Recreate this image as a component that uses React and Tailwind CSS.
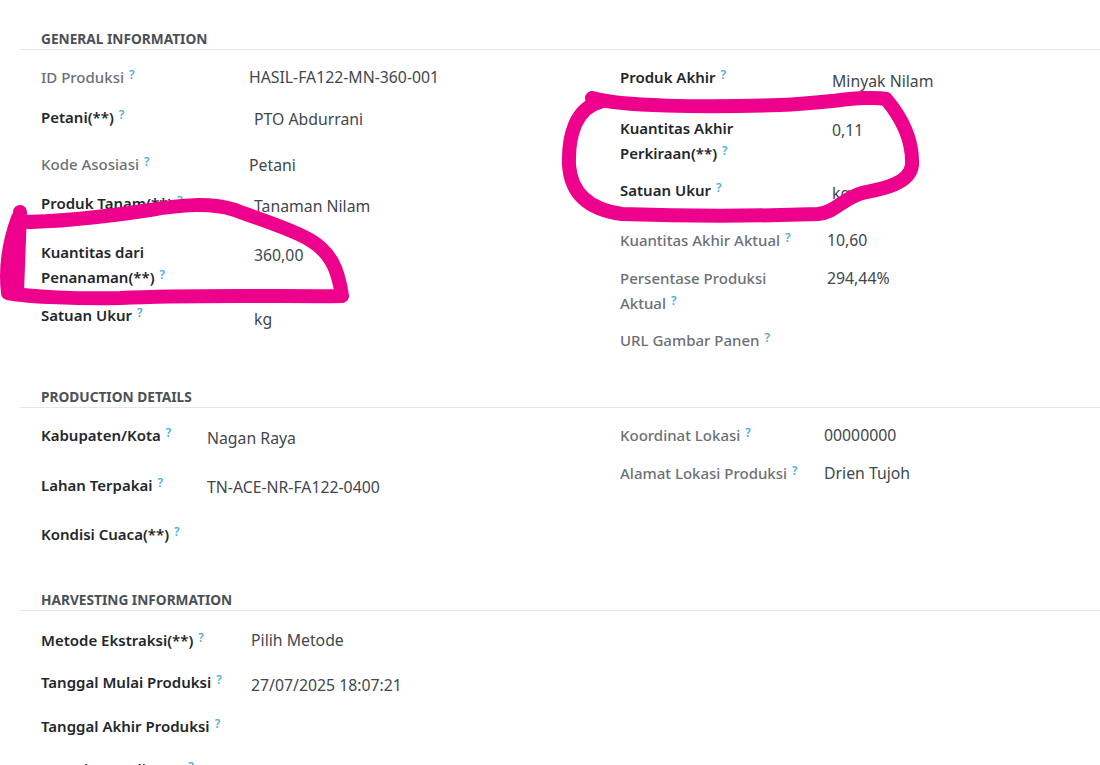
import React from "react";

const Q = () => (
  <sup className="ml-[5px] text-[12px] font-semibold text-[#49b0d8] relative top-[-4px]">?</sup>
);

function Row({ h, label, label2, value, muted, lw, vx = 0, vy = 0 }) {
  return (
    <div className="flex items-start" style={{ height: h }}>
      <div
        className={
          "shrink-0 text-[15px] leading-[25px] " +
          (muted ? "font-medium text-[#6c7075]" : "font-semibold text-[#23272b]")
        }
        style={{ width: lw }}
      >
        {label2 ? (
          <>
            <div>{label}</div>
            <div>
              {label2}
              <Q />
            </div>
          </>
        ) : (
          <div>
            {label}
            <Q />
          </div>
        )}
      </div>
      <div
        className="text-[15.8px] leading-[25px] text-[#41474d]"
        style={{ paddingLeft: vx, paddingTop: vy }}
      >
        {value}
      </div>
    </div>
  );
}

function Header({ children }) {
  return (
    <div className="border-b border-[#e4e6e8] pl-[21px] h-[20px]">
      <div className="text-[13.7px] leading-[20px] font-bold uppercase text-[#4a5057] relative top-[-1px]">
        {children}
      </div>
    </div>
  );
}

export default function App() {
  return (
    <div
      className="relative w-[1100px] h-[765px] overflow-hidden bg-white"
      style={{ fontFamily: '"Noto Sans", "Open Sans", sans-serif' }}
    >
      <div className="pl-[20px] pt-[30px]">
        {/* GENERAL */}
        <Header>General Information</Header>
        <div className="flex pt-[15px] h-[338px]">
          <div className="w-[600px] pl-[21px] flex flex-col">
            <Row h={40} lw={208} muted label="ID Produksi" value="HASIL-FA122-MN-360-001" />
            <Row h={47} lw={208} label="Petani(**)" value="PTO Abdurrani" vx={5} vy={2} />
            <Row h={39} lw={208} muted label="Kode Asosiasi" value="Petani" vy={1} />
            <Row h={49} lw={208} label="Produk Tanam(**)" value="Tanaman Nilam" vx={5} vy={3} />
            <Row h={63} lw={208} label="Kuantitas dari" label2="Penanaman(**)" value="360,00" vx={5} vy={3} />
            <Row h={40} lw={208} label="Satuan Ukur" value="kg" vx={5} vy={4} />
          </div>
          <div className="flex-1 flex flex-col">
            <Row h={51} lw={207} label="Produk Akhir" value="Minyak Nilam" vx={5} vy={4} />
            <Row h={62} lw={207} label="Kuantitas Akhir" label2="Perkiraan(**)" value="0,11" vx={5} vy={2} />
            <Row h={50} lw={207} label="Satuan Ukur" value="kg" vx={5} vy={3} />
            <Row h={38} lw={207} muted label="Kuantitas Akhir Aktual" value="10,60" />
            <Row h={62} lw={207} muted label="Persentase Produksi" label2="Aktual" value="294,44%" />
            <Row h={40} lw={207} muted label="URL Gambar Panen" value="" />
          </div>
        </div>

        {/* PRODUCTION */}
        <Header>Production Details</Header>
        <div className="flex pt-[15px] h-[183px]">
          <div className="w-[600px] pl-[21px] flex flex-col">
            <Row h={50} lw={166} label="Kabupaten/Kota" value="Nagan Raya" vy={3} />
            <Row h={49} lw={166} label="Lahan Terpakai" value="TN-ACE-NR-FA122-0400" vy={2} />
            <Row h={40} lw={166} label="Kondisi Cuaca(**)" value="" />
          </div>
          <div className="flex-1 flex flex-col">
            <Row h={38} lw={204} muted label="Koordinat Lokasi" value="00000000" />
            <Row h={40} lw={204} muted label="Alamat Lokasi Produksi" value="Drien Tujoh" />
          </div>
        </div>

        {/* HARVESTING */}
        <Header>Harvesting Information</Header>
        <div className="flex pt-[17px]">
          <div className="w-[600px] pl-[21px] flex flex-col">
            <Row h={42} lw={210} label="Metode Ekstraksi(**)" value="Pilih Metode" />
            <Row h={44} lw={210} label="Tanggal Mulai Produksi" value="27/07/2025 18:07:21" vy={3} />
            <Row h={43} lw={210} label="Tanggal Akhir Produksi" value="" />
            <Row h={40} lw={210} label="Durasi Penyulingan" value="" />
          </div>
        </div>
      </div>

      {/* hand-drawn annotations */}
      <svg
        className="absolute inset-0 pointer-events-none"
        width="1100"
        height="765"
        viewBox="0 0 1100 765"
      >
        <g
          fill="none"
          stroke="#ec008c"
          strokeWidth="14"
          strokeLinecap="round"
          strokeLinejoin="round"
        >
          <path d="M 18 222 C 60 222, 110 216, 150 210 C 180 205, 210 202, 235 210 C 255 218, 290 228, 310 240 C 330 252, 338 268, 342 296 C 300 297, 200 294, 120 298 C 80 299, 30 297, 8 293 C 5 268, 10 240, 18 218" />
          <path d="M 20 212 L 17 292" />
          <path d="M 592 98 C 620 106, 700 108, 780 105 C 830 103, 865 95, 886 99 C 902 118, 913 140, 912 165 C 910 184, 882 189, 862 193 C 842 199, 836 212, 818 214 C 760 216, 680 216, 622 214 C 592 210, 571 196, 569 165 C 568 135, 576 108, 600 102" />
        </g>
      </svg>
    </div>
  );
}
